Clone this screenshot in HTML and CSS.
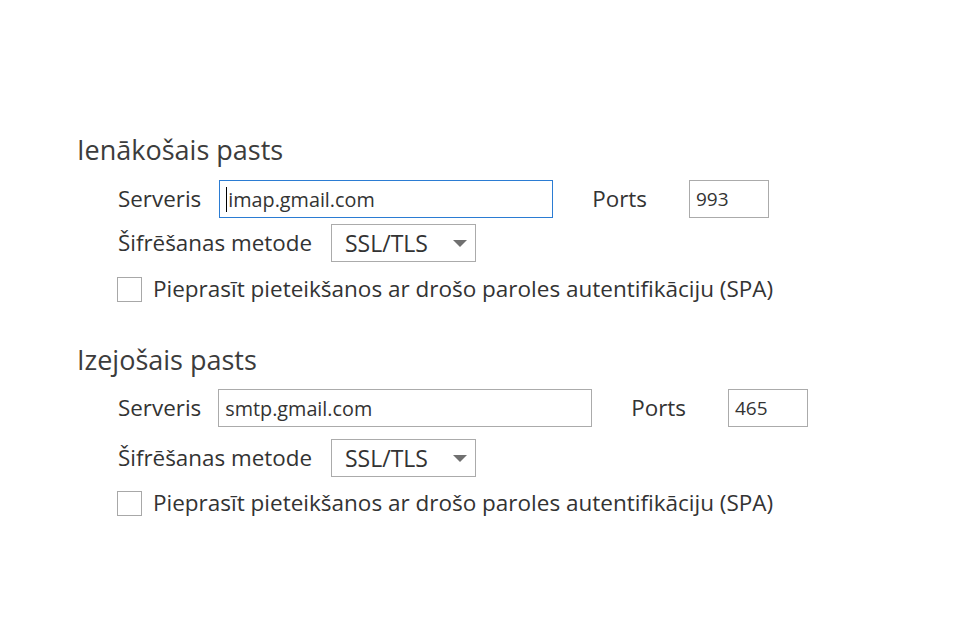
FILE: index.html
```html
<!DOCTYPE html>
<html lang="lv">
<head>
<meta charset="utf-8">
<title>Servera iestatījumi</title>
<link rel="stylesheet" href="styles.css">
</head>
<body>
<main class="page">
  <section class="group group-in">
    <h2 class="group-title">Ienākošais pasts</h2>
    <div class="row row-server">
      <span class="lbl">Serveris</span>
      <div class="field field-server field-focus"><span class="caret"></span>imap.gmail.com</div>
      <span class="lbl lbl-port">Ports</span>
      <div class="field field-port">993</div>
    </div>
    <div class="row row-enc">
      <span class="lbl">Šifrēšanas metode</span>
      <div class="select">SSL/TLS<span class="arrow"></span></div>
    </div>
    <div class="row row-check">
      <span class="checkbox"></span>
      <span class="check-lbl">Pieprasīt pieteikšanos ar drošo paroles autentifikāciju (SPA)</span>
    </div>
  </section>
  <section class="group group-out">
    <h2 class="group-title">Izejošais pasts</h2>
    <div class="row row-server">
      <span class="lbl">Serveris</span>
      <div class="field field-server field-wide">smtp.gmail.com</div>
      <span class="lbl lbl-port">Ports</span>
      <div class="field field-port">465</div>
    </div>
    <div class="row row-enc">
      <span class="lbl">Šifrēšanas metode</span>
      <div class="select">SSL/TLS<span class="arrow"></span></div>
    </div>
    <div class="row row-check">
      <span class="checkbox"></span>
      <span class="check-lbl">Pieprasīt pieteikšanos ar drošo paroles autentifikāciju (SPA)</span>
    </div>
  </section>
</main>
</body>
</html>
```
FILE: styles.css
```css
* { box-sizing: border-box; }
html, body { margin: 0; padding: 0; background: #ffffff; }
body {
  font-family: "Open Sans", "Noto Sans", "Liberation Sans", sans-serif;
  color: #333333;
}
.page {
  padding: 132px 0 0 77px;
}
.group-out { margin-top: 39px; }
.group-title {
  margin: 0;
  font-size: 27px;
  font-weight: 400;
  line-height: 36px;
  color: #3c3c3c;
}
.row {
  display: flex;
  align-items: center;
  padding-left: 41px;
}
.row-server { margin-top: 12px; }
.row-enc { margin-top: 6px; }
.group-out .row-server { margin-top: 11px; }
.group-out .row-enc { margin-top: 12px; }
.row-check { margin-top: 13px; }
.group-out .row-check { margin-top: 12px; }
.lbl {
  font-size: 22.4px;
  line-height: 28px;
  color: #333333;
}
.field {
  height: 38px;
  border: 1px solid #ababab;
  display: flex;
  align-items: center;
  font-size: 19px;
  color: #333333;
  padding-left: 6px;
}
.field-server {
  width: 334px;
  margin-left: 18px;
  font-size: 19.8px;
}
.field-wide { width: 374px; margin-left: 17px; }
.field-focus { border-color: #2b7cd3; }
.caret {
  display: inline-block;
  width: 1px;
  height: 25px;
  margin-right: 1px;
  background: #000000;
}
.lbl-port { margin-left: 39px; }
.field-port {
  width: 80px;
  margin-left: 42px;
}
.select {
  width: 145px;
  height: 38px;
  margin-left: 19px;
  border: 1px solid #ababab;
  display: flex;
  align-items: center;
  justify-content: space-between;
  padding: 0 8px 0 13px;
  font-size: 23px;
  color: #333333;
}
.arrow {
  width: 0;
  height: 0;
  border-left: 7px solid transparent;
  border-right: 7px solid transparent;
  border-top: 7px solid #707070;
}
.checkbox {
  width: 25px;
  height: 25px;
  border: 1px solid #a8a8a8;
  margin-left: -1px;
}
.check-lbl {
  margin-left: 11px;
  font-size: 22.5px;
  line-height: 28px;
  color: #333333;
}
```
